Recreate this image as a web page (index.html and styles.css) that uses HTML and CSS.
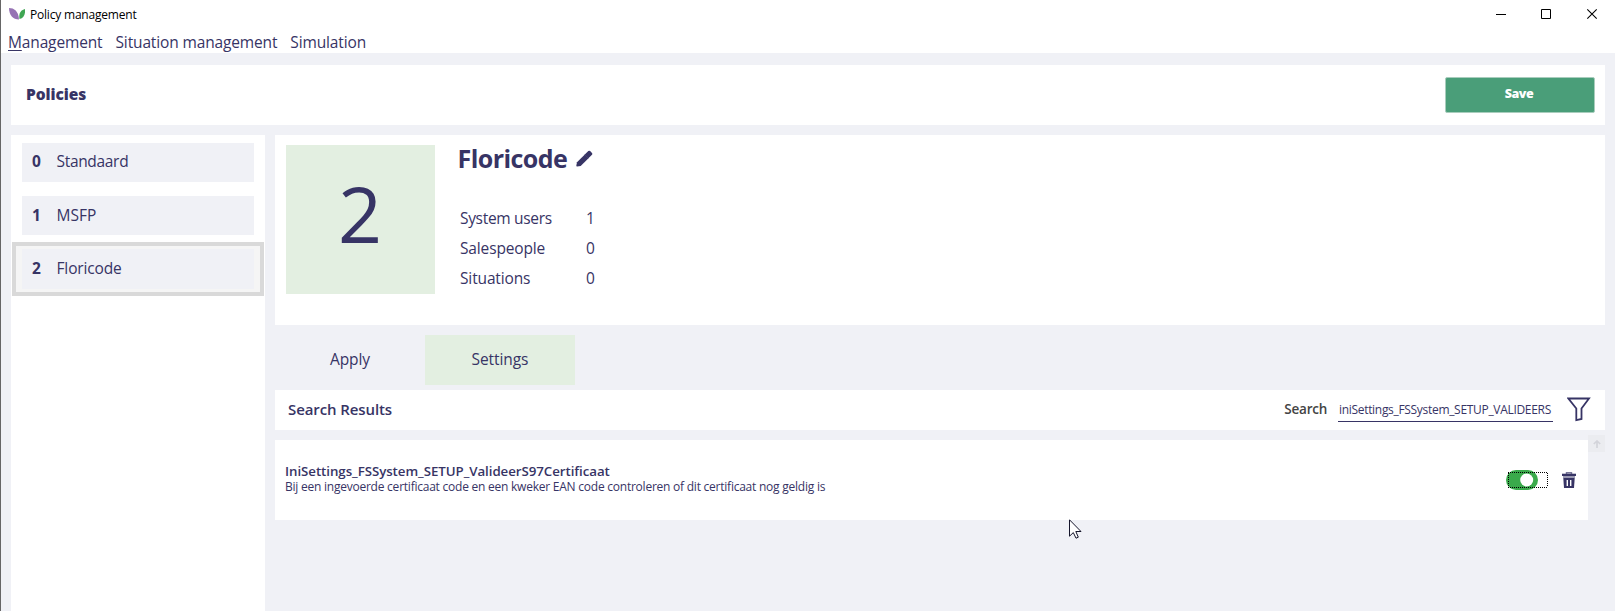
FILE: index.html
```html
<!DOCTYPE html>
<html lang="en">
<head>
<meta charset="utf-8">
<title>Policy management</title>
<link rel="stylesheet" href="styles.css">
</head>
<body>
<div class="window">
  <header class="chrome">
    <div class="titlebar">
      <svg class="logo" width="16" height="12" viewBox="0 0 16 12"><path d="M0 0C5 0 9.500 3 10 11.500C4 11.500 0 7 0 0Z" fill="#9673b4"/><path d="M16 1C12 2 9.500 5 10.500 11C15 10 16.500 6 16 1Z" fill="#3fa653"/></svg>
      <span class="title">Policy management</span>
      <svg class="controls" width="100" height="12" viewBox="0 0 100 12" fill="none" stroke="#000"><path d="M0 5.500H10"/><path d="M45.500 .5H54.500V9.500H45.500Z"/><path d="M91.300 .3L100.700 9.700M100.700 .3L91.300 9.700" stroke-width="1.100"/></svg>
    </div>
    <nav class="menu"><span class="first"><u>M</u>anagement</span><span>Situation management</span><span>Simulation</span></nav>
  </header>
  <section class="pagehead"><h1>Policies</h1><button class="save">Save</button></section>
  <div class="body">
    <aside class="list">
      <div class="slot"><div class="policy"><b>0</b><span class="wide">Standaard</span></div></div>
      <div class="slot"><div class="policy low"><b>1</b><span>MSFP</span></div></div>
      <div class="slot selected"><div class="policy low"><b>2</b><span class="mid">Floricode</span></div></div>
    </aside>
    <main class="main">
      <section class="detail">
        <div class="tile">2</div>
        <div class="info">
          <div class="name"><h2>Floricode</h2><svg width="17" height="17" viewBox="0 0 17 17" fill="#373465"><path d="M1 12.300L8.800 4.500L12.500 8.200L4.700 16L1 16.500Q.3 16.500 .3 15.800Z"/><path d="M8.500 4.800L12.300 1.100Q13.200 .2 14.100 1.100L16 3Q16.800 3.900 16 4.800L12.200 8.500Z"/></svg></div>
          <dl class="stats"><dt class="wide">System users</dt><dd>1</dd><dt class="mid">Salespeople</dt><dd>0</dd><dt class="mid">Situations</dt><dd>0</dd></dl>
        </div>
      </section>
      <nav class="tabs"><div class="tab">Apply</div><div class="tab active">Settings</div></nav>
      <section class="search"><h3>Search Results</h3><label class="lab">Search</label><div class="field">iniSettings_FSSystem_SETUP_VALIDEERS</div>
        <svg class="funnel" width="24" height="25" viewBox="0 0 24 25" fill="none" stroke="#373465" stroke-width="1.800"><path d="M1.400 1.500H22L14.500 11.500V22L9.300 23.100V11.500Z"/></svg>
      </section>
      <div class="results">
        <article class="setting">
          <div class="desc"><h4>IniSettings_FSSystem_SETUP_ValideerS97Certificaat</h4><p>Bij een ingevoerde certificaat code en een kweker EAN code controleren of dit certificaat nog geldig is</p></div>
          <svg class="toggle" width="44" height="20" viewBox="0 0 44 20"><rect width="32" height="20" rx="10" fill="#3aaa4b"/><circle cx="20.700" cy="10" r="6.500" fill="#fff"/><path d="M2 2.500H42M2 17.500H42M2.500 3V17M41.500 3V17" fill="none" stroke="#000" stroke-dasharray="1 1" shape-rendering="crispEdges"/></svg>
          <svg class="trash" width="14" height="16" viewBox="0 0 14 16"><path d="M4.500 2V.7H9.500V2" fill="none" stroke="#777597" stroke-width="1.400"/><path d="M0 1.700H14V4H0Z" fill="#373465"/><path d="M1 4H13V6H1Z" fill="#9b9ab3"/><path d="M1.300 6H12.700L12 16H2Z" fill="#373465"/><path d="M5.300 8V14M8.700 8V14" stroke="#fff" stroke-width="1.400"/></svg>
        </article>
        <div class="scroll"><svg width="8" height="8" viewBox="0 0 8 8" fill="none" stroke="#d3d4da" stroke-width="1.700"><path d="M4 8V1M.8 4L4 1L7.200 4"/></svg></div>
      </div>
    </main>
  </div>
  <svg class="cursor" width="13" height="20" viewBox="0 0 13 20"><path d="M.5 .8V17.200L4.300 13.600L7 19.200L9.300 18.200L6.800 12.500H12Z" fill="#fff" stroke="#14142a"/></svg>
</div>
</body>
</html>
```
FILE: styles.css
```css
* { box-sizing: border-box; }
body { margin: 0; background: #f0f1f6; color: #373465; font-family: "Open Sans", "Noto Sans", sans-serif; font-size: 15.500px; line-height: 20px; white-space: nowrap; }
h1, h2, h3, h4, p, dl, dd { margin: 0; }
.window { position: relative; width: 1615px; height: 611px; overflow: hidden; border-left: 1px solid #666; }
.chrome { height: 53px; background: #fff; }
.titlebar { display: flex; height: 29px; padding: 8px 19px 0 8px; }
.title { margin: -3px 0 0 5px; color: #000; font-size: 12px; letter-spacing: -.2px; }
.controls { margin: 1px 0 0 auto; overflow: visible; }
.menu { display: flex; gap: 13px; padding: 3px 0 0 7px; letter-spacing: -.14px; }
.menu u { text-underline-offset: 2px; text-decoration-thickness: 1px; }
.pagehead { display: flex; justify-content: space-between; margin: 12px 10px 10px; height: 60px; padding: 12px 10px 0 15px; background: #fff; }
.pagehead h1 { font-size: 15.500px; font-weight: 800; line-height: 34px; letter-spacing: -.05px; }
.save { width: 150px; height: 36px; padding: 0 2px 3px 0; border: 1px solid #a9cdbd; border-radius: 2px; background: #4a9e79; color: #fff; font: 800 12.500px/18px "Open Sans", sans-serif; letter-spacing: -.5px; }
.body { display: flex; gap: 10px; margin: 0 10px; height: 476px; }
.list { width: 254px; padding: 0 1px; background: #fff; }
.slot { height: 53px; padding: 8px 10px 0; }
.slot.selected { height: 54px; margin-top: 1px; padding: 3px 6px; border: 4px solid #d9d9d9; background: #f5f5f5; }
.policy { display: flex; height: 39px; padding: 8px 9px; background: #f0f1f6; }
.policy.low { padding-top: 9px; }
.selected .policy { height: 40px; }
.policy b { width: 24.500px; margin-left: 1px; }
.wide { letter-spacing: -.32px; }
.mid { letter-spacing: -.14px; }
.main { flex: 1; }
.detail { display: flex; gap: 23px; height: 190px; padding: 10px 10px 10px 10.500px; background: #fff; }
.tile { width: 149px; height: 149px; background: #e3efe1; font-size: 77px; line-height: 138px; text-align: center; }
.name { display: flex; align-items: center; gap: 9px; height: 26px; }
.name h2 { font-size: 25px; line-height: 30px; letter-spacing: -.55px; }
.stats { display: grid; grid-template-columns: 126px auto; grid-auto-rows: 30px; margin: 37px 0 0 2.500px; }
.tabs { display: flex; height: 65px; padding-top: 10px; }
.tab { width: 150px; height: 50px; line-height: 49px; text-align: center; letter-spacing: -.08px; }
.tab.active { background: #e3efe1; }
.search { display: flex; height: 40px; padding: 0 14px 0 13px; background: #fff; }
.search h3 { margin-right: auto; font-size: 15px; font-weight: 600; line-height: 39px; letter-spacing: -.1px; }
.lab { margin-right: 11px; color: #444; font-size: 13.500px; font-weight: 600; line-height: 38px; letter-spacing: -.25px; }
.field { flex: none; width: 215px; height: 32px; padding: 10px 1px 0; border-bottom: 1px solid #373465; font-size: 12px; letter-spacing: -.31px; }
.funnel { flex: none; margin: 7px 0 0 14px; }
.results { display: flex; padding-top: 5px; }
.setting { display: flex; width: 1313px; height: 80px; margin-top: 5px; padding: 0 12px 0 10px; background: #fff; }
.desc { flex: 1; padding-top: 22px; }
.desc h4 { font-size: 13.300px; font-weight: 600; line-height: 18px; letter-spacing: -.06px; }
.desc p { font-size: 12px; line-height: 14px; letter-spacing: -.235px; }
.toggle { margin: 30px 12px 0 0; }
.trash { margin-top: 32px; }
.scroll { width: 17px; height: 17px; padding: 5px; background: #ebecf0; line-height: 0; }
.cursor { position: absolute; left: 1068px; top: 519px; }
```
